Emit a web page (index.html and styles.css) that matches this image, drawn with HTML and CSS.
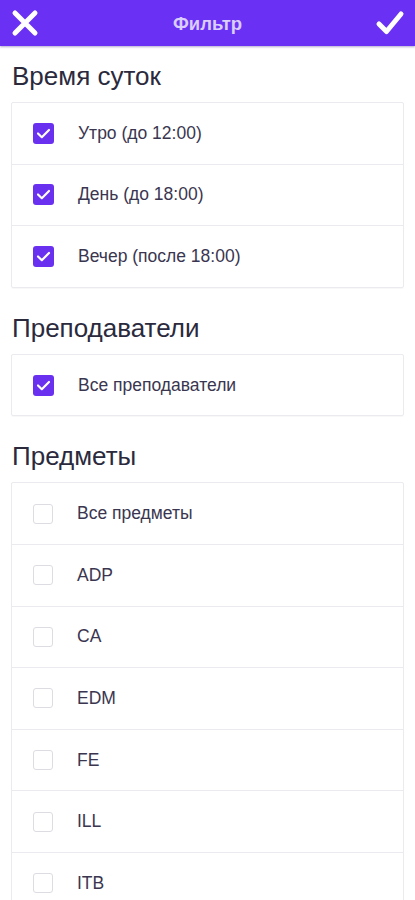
FILE: index.html
```html
<!DOCTYPE html>
<html lang="ru">
<head>
  <meta charset="UTF-8">
  <meta name="viewport" content="width=device-width, initial-scale=1.0">
  <title>Фильтр</title>
  <link rel="stylesheet" href="styles.css">
</head>
<body>
  <header class="toolbar">
    <button class="tool-btn">
      <svg width="28" height="28" viewBox="0 0 28 28"><path d="M4 4 L24 24 M24 4 L4 24" stroke="#fff" stroke-width="5" stroke-linecap="round"/></svg>
    </button>
    <div class="toolbar-title">Фильтр</div>
    <button class="tool-btn">
      <svg width="30" height="28" viewBox="0 0 30 28"><path d="M4 15 L11.5 22.5 L26 5" stroke="#fff" stroke-width="5" fill="none" stroke-linecap="round" stroke-linejoin="round"/></svg>
    </button>
  </header>

  <main class="content">
    <h2 class="section-title first">Время суток</h2>
    <div class="card">
      <label class="row"><span class="box checked"></span>Утро (до 12:00)</label>
      <label class="row"><span class="box checked"></span>День (до 18:00)</label>
      <label class="row"><span class="box checked"></span>Вечер (после 18:00)</label>
    </div>

    <h2 class="section-title">Преподаватели</h2>
    <div class="card">
      <label class="row"><span class="box checked"></span>Все преподаватели</label>
    </div>

    <h2 class="section-title">Предметы</h2>
    <div class="card">
      <label class="row"><span class="box"></span>Все предметы</label>
      <label class="row"><span class="box"></span>ADP</label>
      <label class="row"><span class="box"></span>CA</label>
      <label class="row"><span class="box"></span>EDM</label>
      <label class="row"><span class="box"></span>FE</label>
      <label class="row"><span class="box"></span>ILL</label>
      <label class="row"><span class="box"></span>ITB</label>
    </div>
  </main>
</body>
</html>
```

FILE: styles.css
```css
body {
  margin: 0;
  background-color: #ffffff;
  font-family: 'Liberation Sans', Arial, sans-serif;
  color: #2c2a3e;
  overflow: hidden;
  height: 900px;
}

.toolbar {
  height: 46px;
  background-color: #6a30f4;
  box-shadow: 0 1px 2px rgba(40, 10, 120, 0.35);
  display: flex;
  align-items: center;
  justify-content: space-between;
  padding: 0 10px;
}

.tool-btn {
  background: none;
  border: none;
  padding: 0;
  width: 30px;
  height: 28px;
  display: flex;
  align-items: center;
  justify-content: center;
}

.toolbar-title {
  color: #dacdff;
  font-size: 18.5px;
  font-weight: bold;
  padding-top: 2px;
}

.content {
  padding: 0 11px;
}

.section-title {
  font-size: 26px;
  font-weight: 400;
  line-height: 30px;
  margin: 25px 0 11px 1px;
  color: #2b2a3d;
}

.section-title.first {
  margin-top: 15px;
}

.card {
  border: 1px solid #ebebef;
  border-radius: 2px;
  box-shadow: 0 1px 1px rgba(0, 0, 0, 0.03);
}

.row {
  height: 60.6px;
  display: flex;
  align-items: center;
  padding-left: 21px;
  font-size: 17.5px;
  color: #3a3650;
  border-bottom: 1px solid #ebebef;
}

.row:last-child {
  border-bottom: none;
}

.box {
  width: 18px;
  height: 18px;
  border: 1.5px solid #dcdce2;
  border-radius: 3px;
  margin-right: 24px;
  flex-shrink: 0;
}

.box.checked {
  width: 21px;
  height: 21px;
  border: none;
  background-color: #6a30f0;
  background-image: url("data:image/svg+xml;utf8,<svg xmlns='http://www.w3.org/2000/svg' width='21' height='21' viewBox='0 0 21 21'><path d='M5 10.5 L8.8 14.2 L16 7' stroke='white' stroke-width='2.2' fill='none' stroke-linecap='round' stroke-linejoin='round'/></svg>");
}
```
